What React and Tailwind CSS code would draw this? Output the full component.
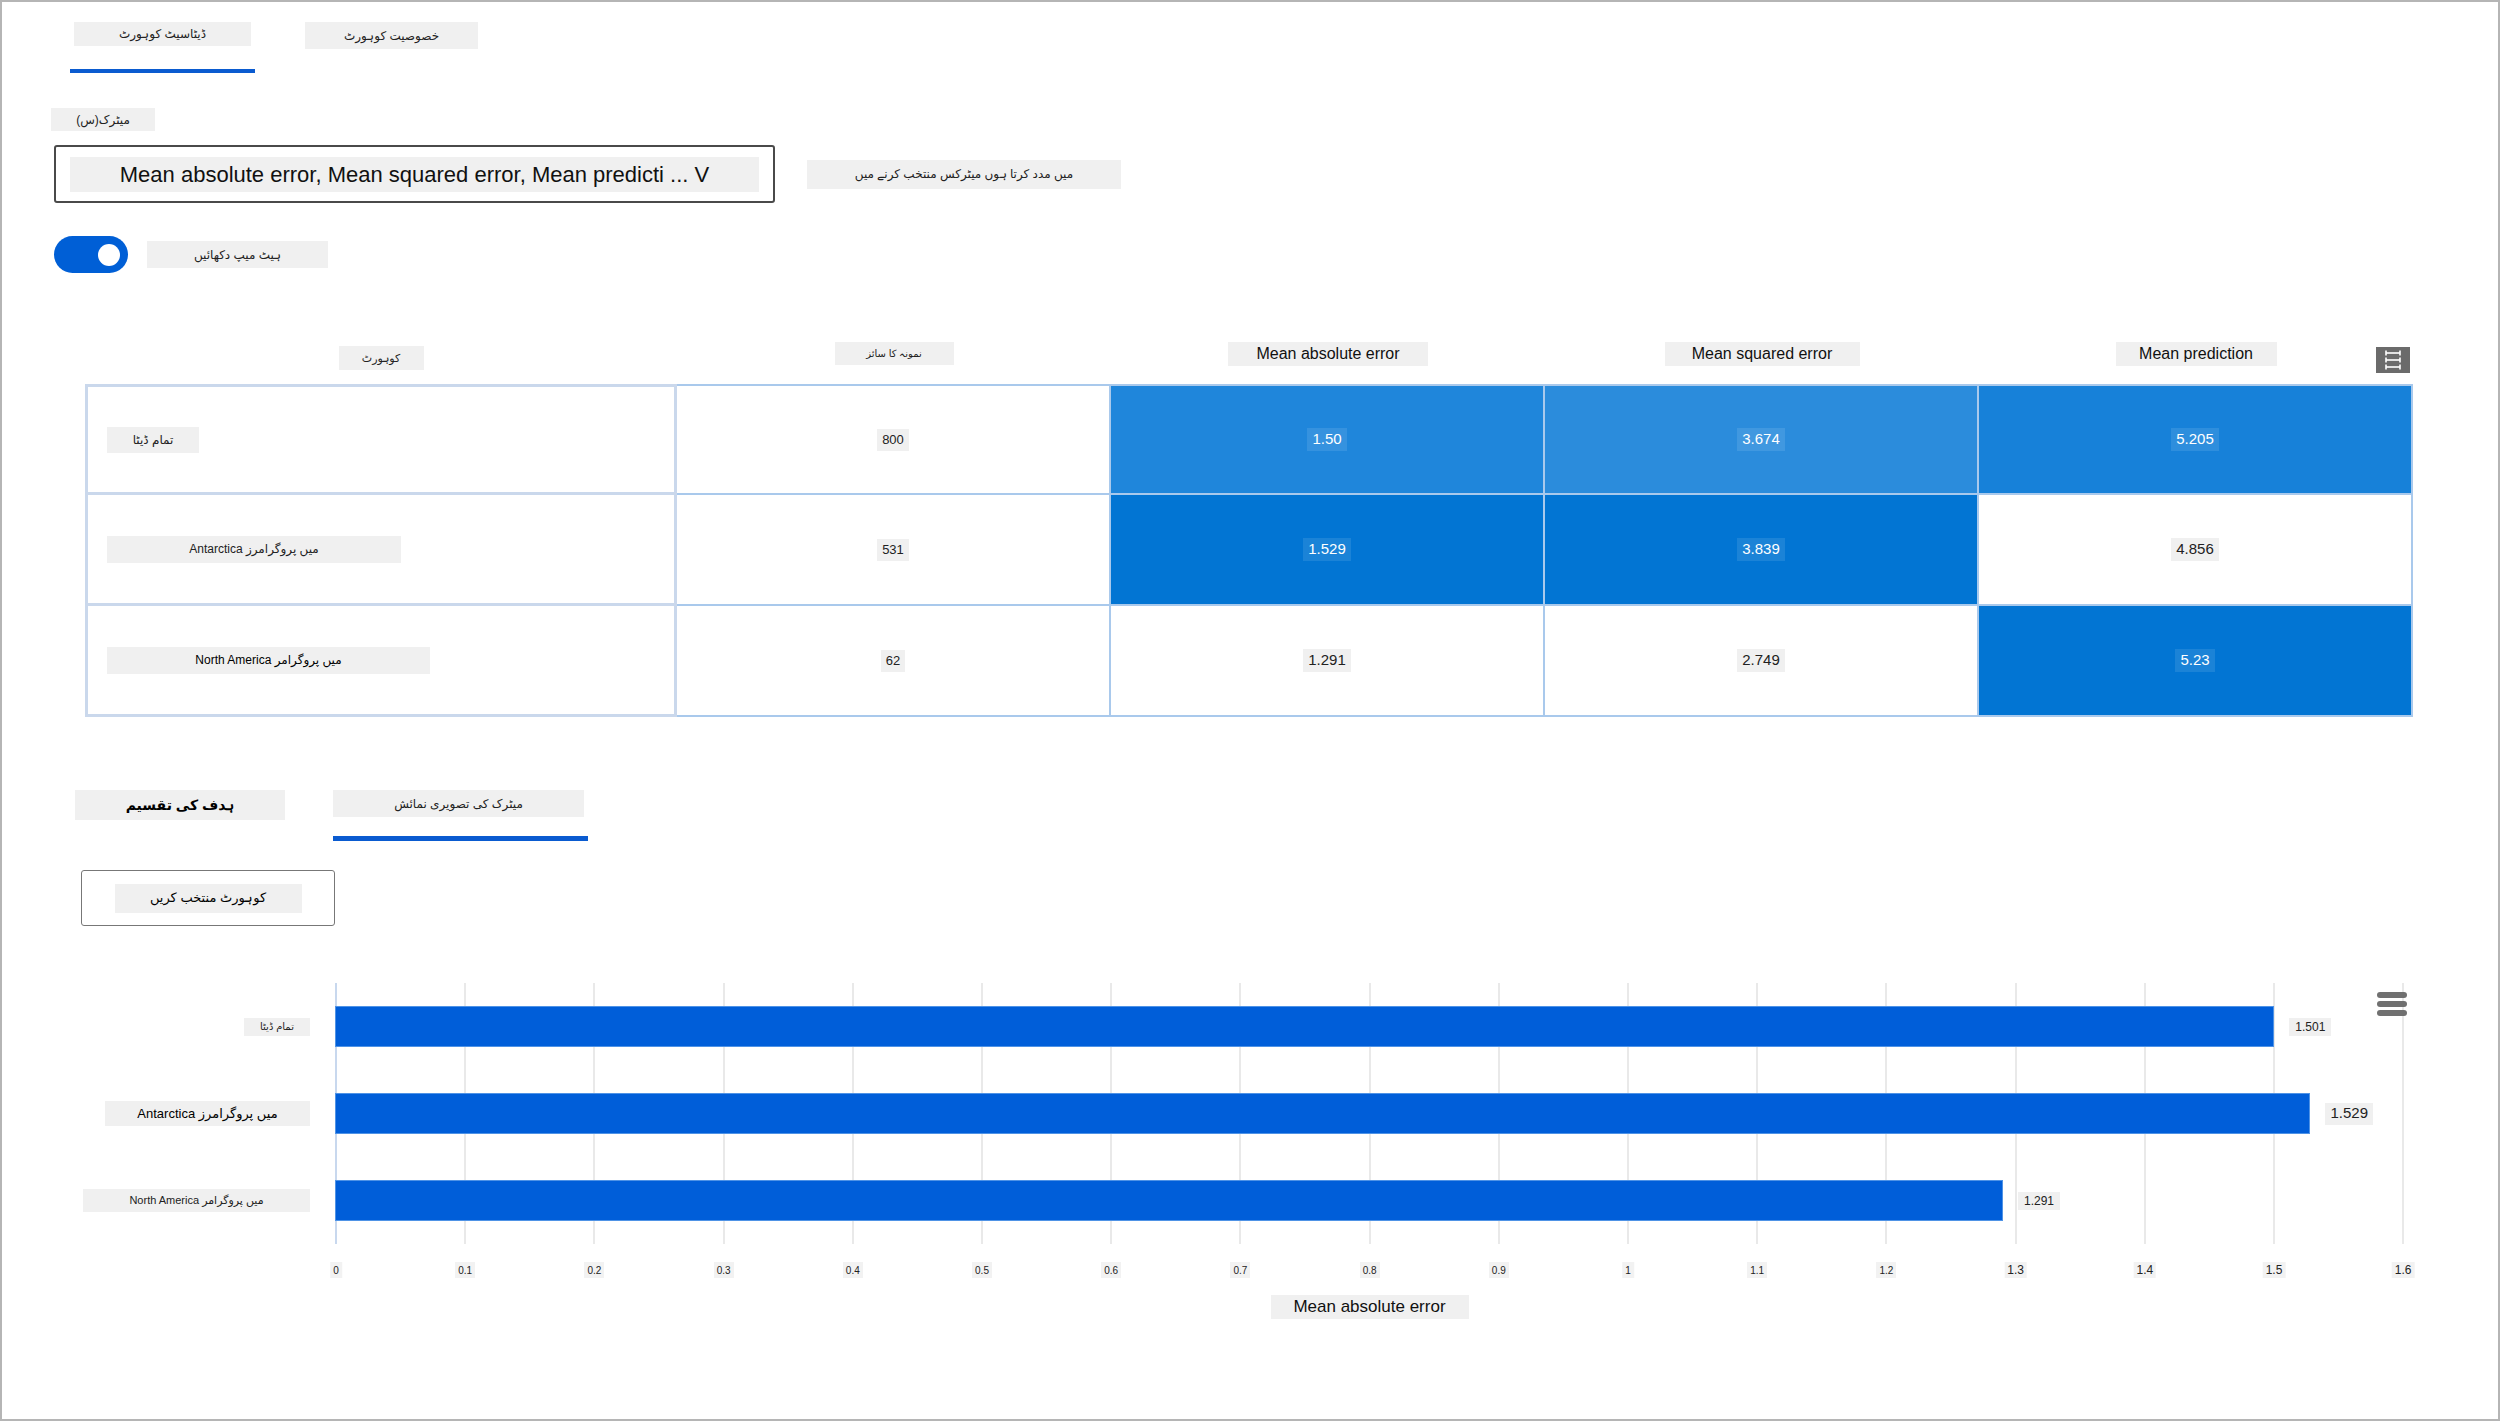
import React from "react";

const UNIT = 1292; // px per 1.0 on the metric axis

const tableRows = [
  {
    name: "تمام ڈیٹا",
    nameWidth: "w-[92px] h-[26px]",
    size: "800",
    cells: [
      { value: "1.50", tone: "bg-[#1f86db]" },
      { value: "3.674", tone: "bg-[#2b8cdc]" },
      { value: "5.205", tone: "bg-[#1781d9]" },
    ],
  },
  {
    name: "Antarctica میں پروگرامرز",
    nameWidth: "w-[294px] h-[27px]",
    size: "531",
    cells: [
      { value: "1.529", tone: "bg-[#0275d3]" },
      { value: "3.839", tone: "bg-[#0275d3]" },
      { value: "4.856", tone: "" },
    ],
  },
  {
    name: "North America میں پروگرامر",
    nameWidth: "w-[323px] h-[27px] text-black",
    size: "62",
    cells: [
      { value: "1.291", tone: "" },
      { value: "2.749", tone: "" },
      { value: "5.23", tone: "bg-[#0275d3]" },
    ],
  },
];

const bars = [
  { label: "تمام ڈیٹا", labelClass: "w-[66px] h-[18px] text-[10px]", value: 1.501, valueClass: "text-[12px] px-[6px] h-[18px]" },
  { label: "Antarctica میں پروگرامرز", labelClass: "w-[205px] h-[25px] text-[13px] text-black", value: 1.529, valueClass: "text-[15px] px-[5px] h-[22px]" },
  { label: "North America میں پروگرامر", labelClass: "w-[227px] h-[23px] text-[11px]", value: 1.291, valueClass: "text-[12px] px-[6px] h-[18px]" },
];

const ticks = ["0", "0.1", "0.2", "0.3", "0.4", "0.5", "0.6", "0.7", "0.8", "0.9", "1", "1.1", "1.2", "1.3", "1.4", "1.5", "1.6"];

const HeatmapIcon = () => (
  <svg width="34" height="26" viewBox="0 0 34 26">
    <rect x="0" y="0" width="34" height="26" fill="#6b6b6b" />
    {[6, 13, 20].map((y) => (
      <g key={y} stroke="#ffffff" strokeWidth="1.6">
        <line x1="10" y1={y} x2="24" y2={y} />
        <line x1="10" y1={y - 2.5} x2="10" y2={y + 2.5} />
        <line x1="24" y1={y - 2.5} x2="24" y2={y + 2.5} />
      </g>
    ))}
  </svg>
);

const MenuIcon = () => (
  <div className="flex w-[30px] flex-col gap-[3px]">
    <span className="h-[6px] rounded-full bg-[#707070]" />
    <span className="h-[6px] rounded-full bg-[#707070]" />
    <span className="h-[6px] rounded-full bg-[#707070]" />
  </div>
);

export default function App() {
  return (
    <div className="relative h-[1421px] w-[2500px] overflow-hidden border-2 border-[#b5b5b5] bg-white pl-[52px] font-['Liberation_Sans','DejaVu_Sans',sans-serif] text-[#222]">
      {/* top tabs */}
      <div className="flex items-start pt-[20px]">
        <div className="ml-[16px] flex w-[185px] flex-col items-center">
          <span className="flex h-[24px] w-[177px] items-center justify-center bg-[#f0f0f0] text-[12px]">ڈیٹاسیٹ کوہورٹ</span>
          <span className="mt-[23px] h-[4px] w-full bg-[#0a5bd0]" />
        </div>
        <span className="ml-[50px] flex h-[27px] w-[173px] items-center justify-center bg-[#f0f0f0] text-[12px]">خصوصیت کوہورٹ</span>
      </div>

      <div className="mt-[35px] flex h-[23px] w-[104px] -translate-x-[3px] items-center justify-center bg-[#f0f0f0] text-[12px]">میٹرک(س)</div>

      <div className="mt-[14px] flex items-center">
        <div className="flex h-[58px] w-[721px] items-center rounded-[3px] border-2 border-[#4a4a4a] px-[14px]">
          <span className="flex h-[35px] w-[690px] items-center justify-center bg-[#f0f0f0] text-[22px] text-[#111]">
            Mean absolute error, Mean squared error, Mean predicti ... V
          </span>
        </div>
        <span className="ml-[32px] flex h-[29px] w-[314px] items-center justify-center bg-[#f0f0f0] text-[12px]">میں مدد کرتا ہوں میٹرکس منتخب کرنے میں</span>
      </div>

      <div className="mt-[33px] flex items-center">
        <div className="flex h-[37px] w-[74px] items-center justify-end rounded-full bg-[#005fd6] pr-[8px]">
          <span className="h-[22px] w-[22px] rounded-full bg-white" />
        </div>
        <span className="ml-[19px] flex h-[27px] w-[181px] items-center justify-center bg-[#f0f0f0] text-[12px]">ہیٹ میپ دکھائیں</span>
      </div>

      {/* heatmap table */}
      <div className="ml-[31px] mt-[62px] w-[2328px]">
        <div className="relative grid h-[49px] grid-cols-[592px_434px_434px_434px_434px] items-end pb-[14px]">
          <div className="flex justify-center">
            <span className="flex h-[24px] w-[85px] items-center justify-center bg-[#f0f0f0] text-[11px]">کوہورٹ</span>
          </div>
          <div className="flex justify-center">
            <span className="mb-[5px] flex h-[23px] w-[119px] items-center justify-center bg-[#f0f0f0] text-[10px]">نمونہ کا سائز</span>
          </div>
          {["Mean absolute error", "Mean squared error", "Mean prediction"].map((h, i) => (
            <div key={h} className="flex justify-center">
              <span className={`mb-[4px] flex h-[24px] items-center justify-center bg-[#f0f0f0] text-[16px] text-[#111] ${i === 0 ? "w-[200px]" : i === 1 ? "w-[195px]" : "w-[161px]"}`}>{h}</span>
            </div>
          ))}
          <div className="absolute right-[3px] top-[12px]">
            <HeatmapIcon />
          </div>
        </div>

        <div className="grid grid-cols-[592px_434px_434px_434px_434px]">
          {tableRows.map((row, r) => (
            <React.Fragment key={row.name}>
              <div className={`flex h-[111px] items-center border-x-[3px] border-b-[3px] border-[#cad8ec] pl-[19px] ${r === 0 ? "border-t-[3px]" : ""}`}>
                <span className={`flex items-center justify-center bg-[#f0f0f0] text-[12px] ${row.nameWidth}`}>{row.name}</span>
              </div>
              <div className={`flex h-[111px] items-center justify-center border-b-2 border-r-2 border-[#a9c9ec] ${r === 0 ? "border-t-2" : ""}`}>
                <span className="flex h-[22px] items-center bg-[#f0f0f0] px-[5px] text-[13px]">{row.size}</span>
              </div>
              {row.cells.map((cell, c) => (
                <div
                  key={c}
                  className={`flex h-[111px] items-center justify-center border-b-2 border-r-2 border-[#a9c9ec] ${r === 0 ? "border-t-2" : ""} ${cell.tone || "bg-white"}`}
                >
                  <span className={`flex h-[23px] items-center px-[5px] text-[15px] ${cell.tone ? "bg-white/10 text-white" : "bg-[#f0f0f0] text-[#222]"}`}>{cell.value}</span>
                </div>
              ))}
            </React.Fragment>
          ))}
        </div>
      </div>

      {/* lower tabs */}
      <div className="mt-[73px] flex items-start">
        <span className="ml-[21px] flex h-[30px] w-[210px] items-center justify-center bg-[#f0f0f0] text-[14px] font-bold text-black">ہدف کی تقسیم</span>
        <div className="ml-[48px] flex w-[255px] flex-col">
          <span className="flex h-[27px] w-[251px] items-center justify-center bg-[#f0f0f0] text-[12px]">میٹرک کی تصویری نمائش</span>
          <span className="mt-[19px] h-[5px] w-full bg-[#0a5bd0]" />
        </div>
      </div>

      <div className="ml-[27px] mt-[29px] flex h-[56px] w-[254px] items-center justify-center rounded-[3px] border border-[#777]">
        <span className="flex h-[29px] w-[187px] items-center justify-center bg-[#f0f0f0] text-[13px] text-black">کوہورٹ منتخب کریں</span>
      </div>

      {/* bar chart */}
      <div className="mt-[57px] flex">
        <div className="flex w-[281px] flex-col pr-[25px]">
          {bars.map((b) => (
            <div key={b.label} className="flex h-[87px] items-center justify-end">
              <span className={`flex items-center justify-center bg-[#f0f0f0] ${b.labelClass}`}>{b.label}</span>
            </div>
          ))}
        </div>
        <div>
          <div className="relative h-[261px] w-[2069px]">
            {ticks.map((t, i) => (
              <span
                key={t}
                className={`absolute top-0 h-full w-[2px] ${i === 0 ? "bg-[#c8d8ee]" : "bg-[#e9e9e9]"}`}
                style={{ left: i * (UNIT / 10) }}
              />
            ))}
            <div className="relative flex flex-col">
              {bars.map((b) => (
                <div key={b.label} className="flex h-[87px] items-center">
                  <div className="h-[41px] border border-[#4f93e6] bg-[#005ed9]" style={{ width: b.value * UNIT }} />
                  <span className={`ml-[15px] flex items-center bg-[#f0f0f0] ${b.valueClass}`}>{b.value.toFixed(3)}</span>
                </div>
              ))}
            </div>
            <div className="absolute left-[2042px] top-[9px]">
              <MenuIcon />
            </div>
          </div>
          <div className="relative mt-[18px] h-[16px]">
            {ticks.map((t, i) => (
              <span
                key={t}
                className={`absolute top-0 flex h-[16px] -translate-x-1/2 items-center bg-[#f2f2f2] px-[3px] ${i >= 13 ? "text-[12px]" : "text-[10px]"}`}
                style={{ left: i * (UNIT / 10) + 1 }}
              >
                {t}
              </span>
            ))}
          </div>
          <div className="mt-[17px] flex w-[2069px] justify-center">
            <span className="flex h-[24px] w-[198px] items-center justify-center bg-[#f0f0f0] text-[17px] text-[#111]">Mean absolute error</span>
          </div>
        </div>
      </div>
    </div>
  );
}
